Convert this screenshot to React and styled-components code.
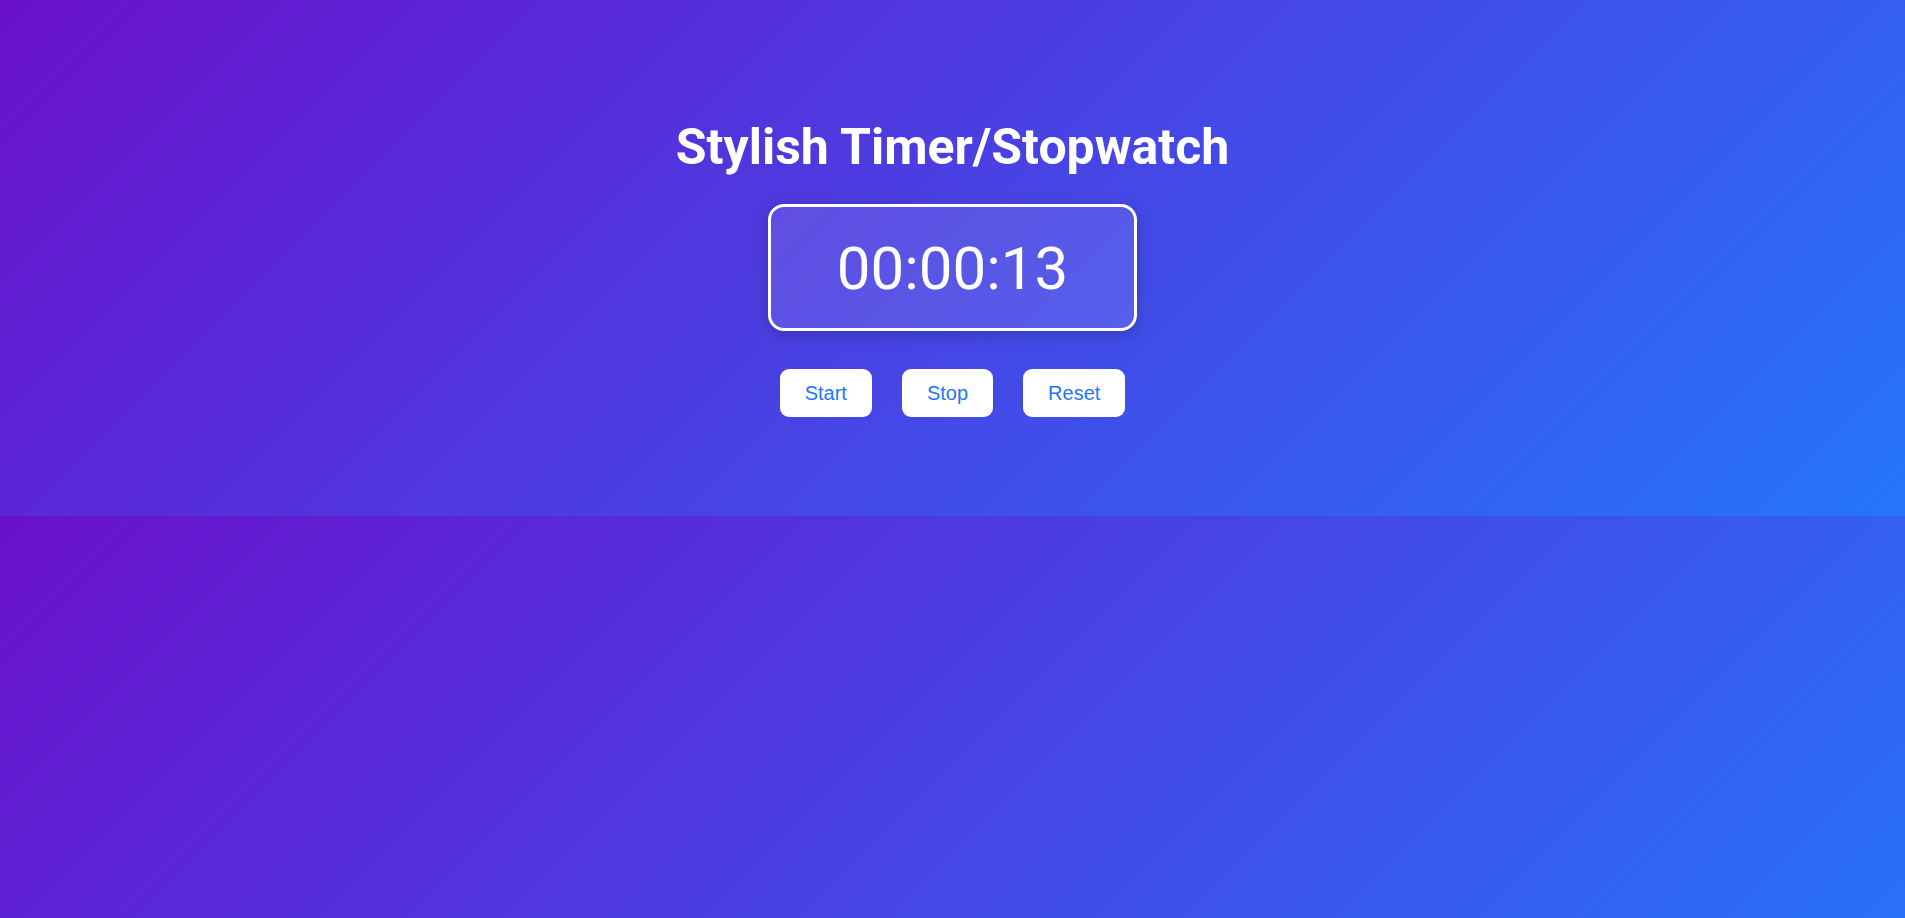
import { useState } from "react";
import styled, { createGlobalStyle } from "styled-components";

const GlobalStyle = createGlobalStyle`
  html {
    margin: 0;
  }
  body {
    margin: 0;
    background: linear-gradient(135deg, #6a11cb, #2575fc);
    font-family: Roboto, "Liberation Sans", sans-serif;
    color: #fff;
  }
`;

const Wrapper = styled.div`
  display: flex;
  flex-direction: column;
  align-items: center;
  padding: 118px 0 99px;
`;

const Title = styled.h1`
  margin: 0 0 28px;
  font-family: Roboto, sans-serif;
  font-weight: 700;
  font-size: 50px;
  line-height: normal;
  color: #fff;
`;

const Display = styled.div`
  box-sizing: border-box;
  height: 127px;
  padding: 2px 66px 0;
  display: flex;
  align-items: center;
  justify-content: center;
  border: 3px solid #fff;
  border-radius: 16px;
  background: rgba(255, 255, 255, 0.1);
  box-shadow: 0 4px 15px rgba(0, 0, 0, 0.2);
  font-family: Roboto, sans-serif;
  font-weight: 400;
  font-size: 60px;
  color: #fff;
`;

const Controls = styled.div`
  display: flex;
  gap: 30px;
  margin-top: 38px;
`;

const Button = styled.button`
  height: 48px;
  padding: 0 25px;
  border: none;
  border-radius: 9px;
  background: #fff;
  color: #2575fc;
  font-family: "Liberation Sans", Arial, sans-serif;
  font-size: 20px;
  cursor: pointer;
`;

// ==============================================
//=======helpers
function format(total) {
  const h = String(Math.floor(total / 3600)).padStart(2, "0");
  const m = String(Math.floor((total % 3600) / 60)).padStart(2, "0");
  const s = String(total % 60).padStart(2, "0");
  return `${h}:${m}:${s}`;
}

// ==============================================
//=======component
function App() {
  const [seconds, setSeconds] = useState(13);

  return (
    <>
      <GlobalStyle />
      <Wrapper>
        <Title>Stylish Timer/Stopwatch</Title>
        <Display>{format(seconds)}</Display>
        <Controls>
          <Button>Start</Button>
          <Button>Stop</Button>
          <Button onClick={() => setSeconds(0)}>Reset</Button>
        </Controls>
      </Wrapper>
    </>
  );
}

export default App;
